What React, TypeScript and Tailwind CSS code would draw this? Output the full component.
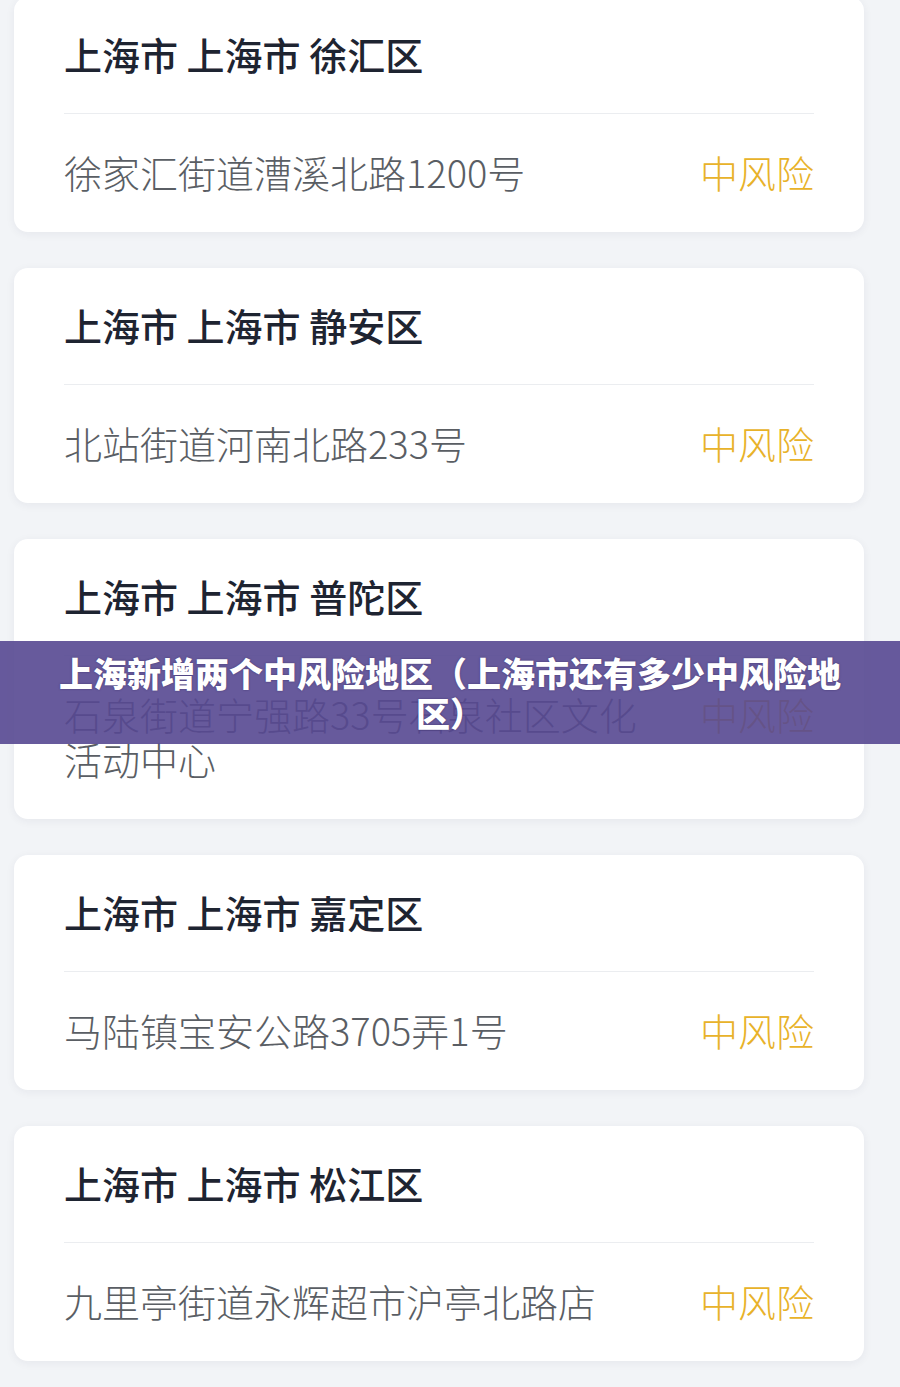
import React from 'react';

interface Area {
  city: string;
  district: string;
  address: string;
  level: string;
}

const areas: Area[] = [
  { city: '上海市 上海市', district: '徐汇区', address: '徐家汇街道漕溪北路1200号', level: '中风险' },
  { city: '上海市 上海市', district: '静安区', address: '北站街道河南北路233号', level: '中风险' },
  { city: '上海市 上海市', district: '普陀区', address: '石泉街道宁强路33号石泉社区文化活动中心', level: '中风险' },
  { city: '上海市 上海市', district: '嘉定区', address: '马陆镇宝安公路3705弄1号', level: '中风险' },
  { city: '上海市 上海市', district: '松江区', address: '九里亭街道永辉超市沪亭北路店', level: '中风险' },
];

function AreaCard({ city, district, address, level }: Area) {
  return (
    <div className="bg-white rounded-[14px] shadow-[0_2px_10px_rgba(30,40,60,0.06)] px-[50px]">
      <div className="h-[116px] flex items-center pb-[4px]">
        <h2 className="text-[38px] leading-[45px] font-medium text-[#1e2431]">
          {city} {district}
        </h2>
      </div>
      <div className="h-px bg-[#ebedf0]" />
      <div className="flex justify-between items-start pt-[35px] pb-[38px]">
        <p className="max-w-[590px] text-[38px] leading-[45px] font-light text-[#5a5e64]">{address}</p>
        <span className="text-[38px] leading-[45px] font-light text-[#e8b22a] whitespace-nowrap">{level}</span>
      </div>
    </div>
  );
}

export default function App() {
  return (
    <div
      className="relative w-[900px] h-[1387px] overflow-hidden bg-[#f2f4f7]"
      style={{ fontFamily: '"Noto Sans CJK SC", "Noto Sans", sans-serif' }}
    >
      <div className="flex flex-col gap-[36px] px-[14px] w-[878px] -mt-[3px]">
        {areas.map((a) => (
          <AreaCard key={a.district} {...a} />
        ))}
      </div>

      <div className="absolute left-0 right-0 top-[641px] h-[103px] bg-[rgba(86,72,145,0.9)] flex items-center justify-center px-[50px]">
        <h1 className="text-[34px] leading-[40px] font-black text-white text-center [text-shadow:0_0_2px_rgba(40,30,80,0.6)]">
          上海新增两个中风险地区（上海市还有多少中风险地区）
        </h1>
      </div>
    </div>
  );
}
